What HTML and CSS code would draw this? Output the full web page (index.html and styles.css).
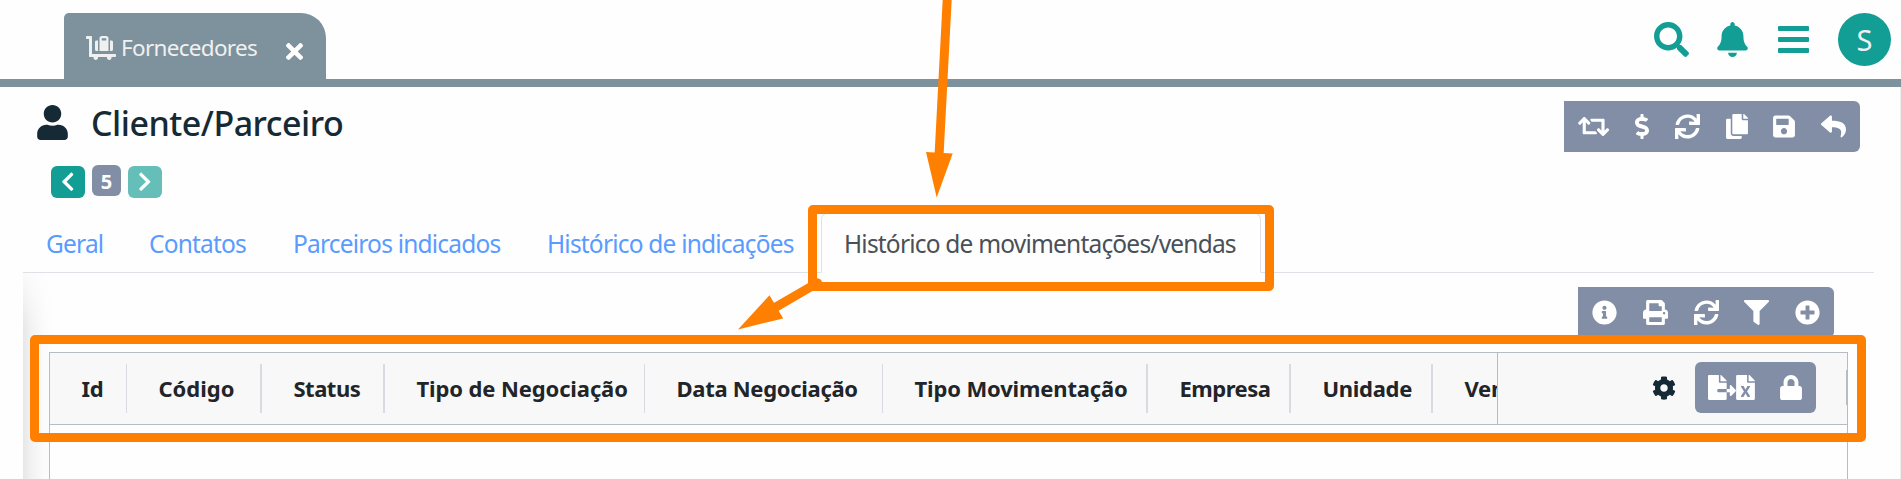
FILE: index.html
```html
<!DOCTYPE html>
<html lang="pt-BR">
<head>
<meta charset="utf-8">
<title>Cliente/Parceiro</title>
<link rel="stylesheet" href="styles.css">
</head>
<body>
<svg class="sprite" aria-hidden="true">
  <symbol id="cart" viewBox="0 0 640 512"><path d="M224 320h32V96h-32c-17.67 0-32 14.33-32 32v160c0 17.67 14.33 32 32 32zm352-32V128c0-17.67-14.33-32-32-32h-32v224h32c17.67 0 32-14.33 32-32zm48 96H128V16c0-8.84-7.16-16-16-16H16C7.16 0 0 7.16 0 16v32c0 8.84 7.16 16 16 16h48v368c0 8.84 7.16 16 16 16h82.94c-1.79 5.03-2.94 10.36-2.94 16 0 26.51 21.49 48 48 48s48-21.49 48-48c0-5.64-1.15-10.97-2.94-16h197.88c-1.79 5.03-2.94 10.36-2.94 16 0 26.51 21.49 48 48 48s48-21.49 48-48c0-5.64-1.15-10.97-2.94-16H624c8.84 0 16-7.16 16-16v-32c0-8.84-7.16-16-16-16zM480 96V48c0-26.51-21.49-48-48-48h-96c-26.51 0-48 21.49-48 48v272h192V96zm-48 0h-96V48h96v48z"/></symbol>
  <symbol id="times" viewBox="0 0 352 512"><path d="M242.72 256l100.07-100.07c12.28-12.28 12.28-32.19 0-44.48l-22.24-22.24c-12.28-12.28-32.19-12.28-44.48 0L176 189.28 75.93 89.21c-12.28-12.28-32.19-12.28-44.48 0L9.21 111.45c-12.28 12.28-12.28 32.19 0 44.48L109.28 256 9.21 356.07c-12.28 12.28-12.28 32.19 0 44.48l22.24 22.24c12.28 12.28 32.2 12.28 44.48 0L176 322.72l100.07 100.07c12.28 12.28 32.2 12.28 44.48 0l22.24-22.24c12.28-12.28 12.28-32.19 0-44.48L242.72 256z"/></symbol>
  <symbol id="search" viewBox="0 0 512 512"><path d="M505 442.7L405.3 343c-4.5-4.5-10.6-7-17-7H372c27.6-35.3 44-79.7 44-128C416 93.1 322.9 0 208 0S0 93.1 0 208s93.1 208 208 208c48.3 0 92.7-16.4 128-44v16.3c0 6.4 2.5 12.5 7 17l99.7 99.7c9.4 9.4 24.6 9.4 33.9 0l28.3-28.3c9.4-9.4 9.4-24.6.1-34zM208 336c-70.7 0-128-57.2-128-128 0-70.7 57.2-128 128-128 70.7 0 128 57.2 128 128 0 70.7-57.2 128-128 128z"/></symbol>
  <symbol id="bell" viewBox="0 0 448 512"><path d="M224 512c35.32 0 63.97-28.65 63.97-64H160.03c0 35.35 28.65 64 63.97 64zm215.39-149.71c-19.32-20.76-55.47-51.99-55.47-154.29 0-77.7-54.48-139.9-127.94-155.16V32c0-17.67-14.32-32-31.98-32s-31.98 14.33-31.98 32v20.84C118.56 68.1 64.08 130.3 64.08 208c0 102.3-36.15 133.53-55.47 154.29-6 6.45-8.66 14.16-8.61 21.71.11 16.4 12.98 32 32.1 32h383.8c19.12 0 32-15.6 32.1-32 .05-7.55-2.61-15.27-8.61-21.71z"/></symbol>
  <symbol id="bars" viewBox="0 0 31 27"><rect width="31" height="5" rx="1"/><rect y="11" width="31" height="5" rx="1"/><rect y="22" width="31" height="5" rx="1"/></symbol>
  <symbol id="user" viewBox="0 0 448 512"><path d="M224 256c70.7 0 128-57.3 128-128S294.7 0 224 0 96 57.3 96 128s57.3 128 128 128zm89.6 32h-16.7c-22.2 10.2-46.9 16-72.9 16s-50.6-5.8-72.9-16h-16.7C60.2 288 0 348.2 0 422.4V464c0 26.5 21.5 48 48 48h352c26.5 0 48-21.5 48-48v-41.6c0-74.2-60.2-134.4-134.4-134.4z"/></symbol>
  <symbol id="chevron" viewBox="0 0 320 512"><path d="M34.52 239.03L228.87 44.69c9.37-9.37 24.57-9.37 33.94 0l22.67 22.67c9.36 9.36 9.37 24.52.04 33.9L131.49 256l154.02 154.75c9.34 9.38 9.32 24.54-.04 33.9l-22.67 22.67c-9.37 9.37-24.57 9.37-33.94 0L34.52 272.97c-9.37-9.37-9.37-24.57 0-33.94z"/></symbol>
  <symbol id="retweet" viewBox="0 0 640 512"><path d="M629.657 343.598L528.971 444.284c-9.373 9.372-24.568 9.372-33.941 0L394.343 343.598c-9.373-9.373-9.373-24.569 0-33.941l10.823-10.823c9.562-9.562 25.133-9.34 34.419.492L480 342.118V160H292.451a24.005 24.005 0 0 1-16.971-7.029l-16-16C244.361 121.851 255.069 96 276.451 96H520c13.255 0 24 10.745 24 24v222.118l40.416-42.792c9.285-9.831 24.856-10.054 34.419-.492l10.823 10.823c9.372 9.372 9.372 24.569-.001 33.941zm-265.138 15.431A23.999 23.999 0 0 0 347.548 352H160V169.881l40.416 42.792c9.286 9.831 24.856 10.054 34.419.491l10.822-10.822c9.373-9.373 9.373-24.569 0-33.941L144.971 67.716c-9.373-9.373-24.569-9.373-33.941 0L10.343 168.402c-9.373 9.373-9.373 24.569 0 33.941l10.822 10.822c9.562 9.562 25.133 9.34 34.419-.491L96 169.881V392c0 13.255 10.745 24 24 24h243.549c21.382 0 32.09-25.851 16.971-40.971l-16.001-16z"/></symbol>
  <symbol id="dollar" viewBox="0 0 288 512"><path d="M209.2 233.4l-108-31.6C88.7 198.2 80 186.5 80 173.5c0-16.3 13.2-29.5 29.5-29.5h66.3c12.2 0 24.2 3.7 34.2 10.5 6.1 4.1 14.3 3.1 19.5-2l34.8-34c7.1-6.9 6.1-18.4-1.8-24.5C238 74.8 207.4 64.1 176 64V16c0-8.8-7.2-16-16-16h-32c-8.8 0-16 7.2-16 16v48h-2.5C45.8 64-5.4 118.7.5 183.6c4.2 46.1 39.4 83.6 83.8 96.6l102.5 30c12.5 3.7 21.2 15.3 21.2 28.3 0 16.3-13.2 29.5-29.5 29.5h-66.3C100 368 88 364.3 78 357.5c-6.1-4.1-14.3-3.1-19.5 2l-34.8 34c-7.1 6.9-6.1 18.4 1.8 24.5 24.5 19.2 55.1 29.9 86.5 30v48c0 8.8 7.2 16 16 16h32c8.8 0 16-7.2 16-16v-48.2c46.6-.9 90.3-28.6 105.7-72.7 21.5-61.6-14.6-124.8-72.5-141.7z"/></symbol>
  <symbol id="sync" viewBox="0 0 512 512"><path d="M440.65 12.57l4 82.77A247.16 247.16 0 0 0 255.83 8C134.73 8 33.91 94.92 12.29 209.82A12 12 0 0 0 24.09 224h49.05a12 12 0 0 0 11.67-9.26 175.91 175.91 0 0 1 317-56.94l-101.46-4.86a12 12 0 0 0-12.57 12v47.41a12 12 0 0 0 12 12H500a12 12 0 0 0 12-12V12a12 12 0 0 0-12-12h-47.37a12 12 0 0 0-11.98 12.57zM255.83 432a175.61 175.61 0 0 1-146-77.8l101.8 4.87a12 12 0 0 0 12.57-12v-47.4a12 12 0 0 0-12-12H12a12 12 0 0 0-12 12V500a12 12 0 0 0 12 12h47.35a12 12 0 0 0 12-12.6l-4.15-82.57A247.17 247.17 0 0 0 255.83 504c121.11 0 221.93-86.92 243.55-201.82a12 12 0 0 0-11.8-14.18h-49.05a12 12 0 0 0-11.67 9.26A175.86 175.86 0 0 1 255.83 432z"/></symbol>
  <symbol id="copy" viewBox="0 0 448 512"><path d="M320 448v40c0 13.255-10.745 24-24 24H24c-13.255 0-24-10.745-24-24V120c0-13.255 10.745-24 24-24h72v296c0 30.879 25.121 56 56 56h168zm0-344V0H152c-13.255 0-24 10.745-24 24v368c0 13.255 10.745 24 24 24h272c13.255 0 24-10.745 24-24V128H344c-13.2 0-24-10.8-24-24zm120.971-31.029L375.029 7.029A24 24 0 0 0 358.059 0H352v96h96v-6.059a24 24 0 0 0-7.029-16.97z"/></symbol>
  <symbol id="save" viewBox="0 0 448 512"><path d="M433.941 129.941l-83.882-83.882A48 48 0 0 0 316.118 32H48C21.49 32 0 53.49 0 80v352c0 26.51 21.49 48 48 48h352c26.51 0 48-21.49 48-48V163.882a48 48 0 0 0-14.059-33.941zM224 416c-35.346 0-64-28.654-64-64 0-35.346 28.654-64 64-64s64 28.654 64 64c0 35.346-28.654 64-64 64zm96-304.52V212c0 6.627-5.373 12-12 12H76c-6.627 0-12-5.373-12-12V108c0-6.627 5.373-12 12-12h228.52c3.183 0 6.235 1.264 8.485 3.515l3.48 3.48A11.996 11.996 0 0 1 320 111.48z"/></symbol>
  <symbol id="reply" viewBox="0 0 512 512"><path d="M8.309 189.836L184.313 37.851C199.719 24.546 224 35.347 224 56.015v80.053c160.629 1.839 288 34.032 288 186.258 0 61.441-39.581 122.309-83.333 154.132-13.653 9.931-33.111-2.533-28.077-18.631 45.344-145.012-21.507-183.51-176.59-185.742V360c0 20.7-24.3 31.453-39.687 18.164l-176.004-152c-11.071-9.562-11.086-26.753 0-36.328z"/></symbol>
  <symbol id="info" viewBox="0 0 512 512"><path d="M256 8C119.043 8 8 119.083 8 256c0 136.997 111.043 248 248 248s248-111.003 248-248C504 119.083 392.957 8 256 8zm0 110c23.196 0 42 18.804 42 42s-18.804 42-42 42-42-18.804-42-42 18.804-42 42-42zm56 254c0 6.627-5.373 12-12 12h-88c-6.627 0-12-5.373-12-12v-24c0-6.627 5.373-12 12-12h12v-64h-12c-6.627 0-12-5.373-12-12v-24c0-6.627 5.373-12 12-12h64c6.627 0 12 5.373 12 12v100h12c6.627 0 12 5.373 12 12v24z"/></symbol>
  <symbol id="print" viewBox="0 0 512 512"><path d="M448 192V77.25c0-8.49-3.37-16.62-9.37-22.63L393.37 9.37c-6-6-14.14-9.37-22.63-9.37H96C78.33 0 64 14.33 64 32v160c-35.35 0-64 28.65-64 64v112c0 8.84 7.16 16 16 16h48v96c0 17.67 14.33 32 32 32h320c17.67 0 32-14.33 32-32v-96h48c8.84 0 16-7.16 16-16V256c0-35.35-28.65-64-64-64zm-64 256H128v-96h256v96zm0-224H128V64h192v48c0 8.84 7.16 16 16 16h48v96zm48 72c-13.25 0-24-10.75-24-24 0-13.26 10.75-24 24-24s24 10.74 24 24c0 13.25-10.75 24-24 24z"/></symbol>
  <symbol id="filter" viewBox="0 0 512 512"><path d="M487.976 0H24.028C2.71 0-8.047 25.866 7.058 40.971L192 225.941V432c0 7.831 3.821 15.17 10.237 19.662l80 55.98C298.02 518.69 320 507.493 320 487.98V225.941l184.947-184.97C520.021 25.896 509.338 0 487.976 0z"/></symbol>
  <symbol id="plus" viewBox="0 0 512 512"><path d="M256 8C119 8 8 119 8 256s111 248 248 248 248-111 248-248S393 8 256 8zm144 276c0 6.6-5.4 12-12 12h-92v92c0 6.6-5.4 12-12 12h-56c-6.6 0-12-5.4-12-12v-92h-92c-6.6 0-12-5.4-12-12v-56c0-6.6 5.4-12 12-12h92v-92c0-6.6 5.4-12 12-12h56c6.6 0 12 5.4 12 12v92h92c6.6 0 12 5.4 12 12v56z"/></symbol>
  <symbol id="cog" viewBox="0 0 512 512"><path d="M487.4 315.7l-42.6-24.6c4.3-23.2 4.3-47 0-70.2l42.6-24.6c4.9-2.8 7.1-8.6 5.5-14-11.1-35.6-30-67.8-54.7-94.6-3.8-4.1-10-5.1-14.8-2.3L380.8 110c-17.9-15.4-38.5-27.3-60.8-35.1V25.8c0-5.6-3.9-10.5-9.4-11.7-36.7-8.2-74.3-7.8-109.2 0-5.5 1.2-9.4 6.1-9.4 11.7V75c-22.2 7.9-42.8 19.8-60.8 35.1L88.7 85.5c-4.9-2.8-11-1.9-14.8 2.3-24.7 26.7-43.6 58.9-54.7 94.6-1.7 5.4.6 11.2 5.5 14L67.3 221c-4.3 23.2-4.3 47 0 70.2l-42.6 24.6c-4.9 2.8-7.1 8.6-5.5 14 11.1 35.6 30 67.8 54.7 94.6 3.8 4.1 10 5.1 14.8 2.3l42.6-24.6c17.9 15.4 38.5 27.3 60.8 35.1v49.2c0 5.6 3.9 10.5 9.4 11.7 36.7 8.2 74.3 7.8 109.2 0 5.5-1.2 9.4-6.1 9.4-11.7v-49.2c22.2-7.9 42.8-19.8 60.8-35.1l42.6 24.6c4.9 2.8 11 1.9 14.8-2.3 24.7-26.7 43.6-58.9 54.7-94.6 1.5-5.5-.7-11.3-5.6-14.1zM256 336c-44.1 0-80-35.9-80-80s35.9-80 80-80 80 35.9 80 80-35.9 80-80 80z"/></symbol>
  <symbol id="export" viewBox="0 0 576 512"><path d="M384 121.9c0-6.3-2.5-12.4-7-16.9L279.1 7c-4.5-4.5-10.6-7-17-7H256v128h128zM571 308l-95.7-96.4c-10.1-10.1-27.4-3-27.4 11.3V288h-64v64h64v65.2c0 14.3 17.3 21.4 27.4 11.3L571 332c6.6-6.6 6.6-17.4 0-24zm-379 28v-32c0-8.8 7.2-16 16-16h176V160H248c-13.2 0-24-10.8-24-24V0H24C10.7 0 0 10.7 0 24v464c0 13.3 10.7 24 24 24h336c13.3 0 24-10.7 24-24V352H208c-8.8 0-16-7.2-16-16z"/></symbol>
  <symbol id="excel" viewBox="0 0 384 512"><path d="M224 136V0H24C10.7 0 0 10.7 0 24v464c0 13.3 10.7 24 24 24h336c13.3 0 24-10.7 24-24V160H248c-13.2 0-24-10.8-24-24zm60.1 106.5L224 336l60.1 93.5c5.1 8-.6 18.5-10.1 18.5h-34.9c-4.4 0-8.5-2.4-10.6-6.3C208.9 405.5 192 373 192 373c-6.4 14.8-10 20-36.6 68.8-2.1 3.9-6.1 6.3-10.5 6.3H110c-9.5 0-15.2-10.5-10.1-18.5l60.3-93.5-60.3-93.5c-5.2-8 .6-18.5 10.1-18.5h34.8c4.4 0 8.5 2.4 10.6 6.3 26.1 48.8 20 33.6 36.6 68.5 0 0 6.1-11.7 36.6-68.5 2.1-3.9 6.2-6.3 10.6-6.3H274c9.5-.1 15.2 10.4 10.1 18.4zM384 121.9v6.1H256V0h6.1c6.4 0 12.5 2.5 17 7l97.9 98c4.5 4.5 7 10.6 7 16.9z"/></symbol>
  <symbol id="lock" viewBox="0 0 448 512"><path d="M400 224h-24v-72C376 68.2 307.8 0 224 0S72 68.2 72 152v72H48c-26.5 0-48 21.5-48 48v192c0 26.5 21.5 48 48 48h352c26.5 0 48-21.5 48-48V272c0-26.5-21.5-48-48-48zm-104 0H152v-72c0-39.7 32.3-72 72-72s72 32.3 72 72v72z"/></symbol>
</svg>

<header class="topbar">
  <div class="window-tab">
    <svg class="cart"><use href="#cart"/></svg>
    <span class="window-name">Fornecedores</span>
    <svg class="close"><use href="#times"/></svg>
  </div>
  <div class="top-actions">
    <svg class="search"><use href="#search"/></svg>
    <svg class="bell"><use href="#bell"/></svg>
    <svg class="bars"><use href="#bars"/></svg>
    <span class="avatar">S</span>
  </div>
</header>

<main class="page">
  <div class="title-row">
    <svg class="user"><use href="#user"/></svg>
    <h1 class="title">Cliente/Parceiro</h1>
    <div class="toolbar">
      <svg class="ic w31"><use href="#retweet"/></svg>
      <svg class="ic w14"><use href="#dollar"/></svg>
      <svg class="ic"><use href="#sync"/></svg>
      <svg class="ic w22"><use href="#copy"/></svg>
      <svg class="ic w22"><use href="#save"/></svg>
      <svg class="ic"><use href="#reply"/></svg>
    </div>
  </div>
  <div class="pager">
    <span class="page-btn"><svg class="chev"><use href="#chevron"/></svg></span>
    <span class="page-num">5</span>
    <span class="page-btn next"><svg class="chev"><use href="#chevron"/></svg></span>
  </div>
  <nav class="tabs">
    <a class="tab t-geral">Geral</a>
    <a class="tab t-contatos">Contatos</a>
    <a class="tab t-parceiros">Parceiros indicados</a>
    <a class="tab t-indicacoes">Histórico de indicações</a>
    <a class="tab active">Histórico de movimentações/vendas</a>
  </nav>
  <section class="panel">
    <div class="toolbar grid-tools">
      <svg class="ic"><use href="#info"/></svg>
      <svg class="ic"><use href="#print"/></svg>
      <svg class="ic"><use href="#sync"/></svg>
      <svg class="ic"><use href="#filter"/></svg>
      <svg class="ic"><use href="#plus"/></svg>
    </div>
    <div class="grid">
      <div class="grid-head">
        <div class="cols">
          <div class="col c-id">Id</div>
          <div class="col c-codigo thick">Código</div>
          <div class="col c-status thick">Status</div>
          <div class="col c-tiponeg">Tipo de Negociação</div>
          <div class="col c-data">Data Negociação</div>
          <div class="col c-tipomov thick">Tipo Movimentação</div>
          <div class="col c-empresa thick">Empresa</div>
          <div class="col c-unidade thick">Unidade</div>
          <div class="col c-ver">Vendedor</div>
        </div>
        <div class="head-actions">
          <svg class="cog"><use href="#cog"/></svg>
          <div class="head-buttons">
            <svg class="ic w28"><use href="#export"/></svg>
            <svg class="ic w19"><use href="#excel"/></svg>
            <svg class="ic w22 lock"><use href="#lock"/></svg>
          </div>
          <span class="resizer"></span>
        </div>
      </div>
    </div>
  </section>
</main>

<div class="mark mark-tab"></div>
<div class="mark mark-head"></div>
<svg class="arrows" viewBox="0 0 1901 479">
  <path class="shaft" d="M947.7 -10L939 156M817.5 282.8L776 307"/>
  <path class="tip" d="M926 152L952.7 153.4L936.7 197.5ZM769.5 295.3L783.2 318.4L738 329.5Z"/>
</svg>
</body>
</html>
```

FILE: styles.css
```css
* { box-sizing: border-box; }
body {
  position: relative;
  margin: 0;
  height: 479px;
  overflow: hidden;
  background: #fefefe;
  font-family: "Noto Sans", "Open Sans", sans-serif;
  color: #212529;
}
svg { display: block; flex: none; fill: currentColor; }
.sprite { position: absolute; width: 0; height: 0; }

.topbar {
  display: flex;
  justify-content: space-between;
  height: 87px;
  padding: 13px 10px 0 64px;
  border-bottom: 8px solid #7d929c;
}
.window-tab {
  display: flex;
  width: 262px;
  height: 66px;
  padding-left: 22px;
  border-radius: 5px 25px 0 0;
  background: #7d929c;
  color: #f0f0f0;
}
.cart { width: 30px; height: 24px; margin-top: 23px; }
.window-name {
  width: 164px;
  padding: 16px 0 0 5px;
  font-size: 22.5px;
  letter-spacing: -.7px;
  line-height: 38px;
  white-space: nowrap;
}
.close { width: 17px; height: 25px; margin-top: 26px; margin-left: 6px; color: #fff; }
.top-actions { display: flex; color: #129e94; }
.search { width: 35px; height: 35px; margin: 9px 28px 0 0; }
.bell { width: 31px; height: 35px; margin: 9px 30px 0 0; }
.bars { width: 31px; height: 27px; margin: 13px 29px 0 0; }
.avatar {
  width: 53px;
  height: 53px;
  border-radius: 50%;
  background: #129e94;
  color: #f0f0f0;
  font-size: 29px;
  line-height: 54px;
  text-align: center;
}

.page { height: 392px; padding: 14px 26px 0 23px; border-right: 1px solid #eee; }
.title-row { display: flex; height: 51px; padding: 0 14px; }
.user { width: 31px; height: 35px; margin-top: 4px; color: #152a35; }
.title {
  flex: 1;
  margin: 0 0 0 23px;
  font-size: 34px;
  font-weight: 500;
  letter-spacing: -.5px;
  line-height: 45px;
  color: #152a35;
}
.toolbar {
  display: flex;
  align-items: center;
  justify-content: space-between;
  width: 296px;
  height: 51px;
  padding: 0 14px;
  border-radius: 0 6px 6px 0;
  background: #828ea6;
  color: #fff;
}
.ic { width: 25px; height: 25px; }
.w31 { width: 31.25px; }
.w28 { width: 28px; }
.w22 { width: 22px; }
.w19 { width: 19px; }
.w14 { width: 14px; }

.pager { display: flex; gap: 7px; height: 34px; margin: 13px 0 0 28px; color: #fff; }
.page-btn {
  display: flex;
  align-items: center;
  justify-content: center;
  width: 34px;
  height: 32px;
  margin-top: 1px;
  border-radius: 6px;
  background: #129e94;
}
.next { background: #65bfb8; }
.next .chev { transform: scaleX(-1); }
.chev { width: 13.5px; height: 21.5px; }
.page-num {
  width: 29px;
  height: 31px;
  border-radius: 6px;
  background: #828ea6;
  font-size: 20px;
  font-weight: 700;
  line-height: 33px;
  text-align: center;
}

.tabs {
  display: flex;
  height: 60px;
  margin-top: 14px;
  border-bottom: 1px solid #dee2e6;
}
.tab {
  height: 60px;
  padding: 0 0 0 23px;
  font-size: 24.5px;
  letter-spacing: -.8px;
  line-height: 61px;
  white-space: nowrap;
  color: #5a9bff;
}
.t-geral { width: 103px; }
.t-contatos { width: 144px; }
.t-parceiros { width: 254px; }
.t-indicacoes { width: 297px; }
.active {
  width: 440px;
  padding-left: 22px;
  border: 1px solid #dee2e6;
  border-bottom-color: #fefefe;
  border-radius: 6px 6px 0 0;
  line-height: 59px;
  color: #495057;
}

.panel { position: relative; height: 206px; padding: 14px 26px 0; }
.panel::before {
  content: "";
  position: absolute;
  left: 0;
  top: 0;
  width: 30px;
  height: 100%;
  background: linear-gradient(to right, rgba(0,0,0,.09), rgba(0,0,0,.045) 30%, rgba(0,0,0,.012) 70%, transparent);
  mask-image: linear-gradient(to bottom, rgba(0,0,0,.15), #000 55px);
}
.grid-tools { width: 256px; margin: 0 14px 0 auto; }
.grid {
  position: relative;
  height: 150px;
  margin-top: 14px;
  border: 1px solid #b6bcc3;
  background: #fefefe;
}
.grid-head { display: flex; height: 72px; border-bottom: 1px solid #b6bcc3; background: #f8f8f8; }
.cols { display: flex; align-items: center; width: 1447px; overflow: hidden; }
.col {
  flex: none;
  height: 49px;
  border-right: 1px solid #d8dbe0;
  padding-left: 31.5px;
  font-size: 22px;
  font-weight: 700;
  letter-spacing: -.3px;
  line-height: 49px;
  white-space: nowrap;
}
.thick { border-right-width: 2px; }
.c-id { width: 77px; }
.c-codigo { width: 135px; letter-spacing: 0; }
.c-status { width: 123px; letter-spacing: -.5px; }
.c-tiponeg { width: 260px; letter-spacing: -.12px; }
.c-data { width: 238px; }
.c-tipomov { width: 265px; letter-spacing: -.15px; }
.c-empresa { width: 143px; letter-spacing: -.5px; }
.c-unidade { width: 142px; }
.c-ver { width: 160px; border: 0; }
.head-actions {
  display: flex;
  flex: 1;
  align-items: center;
  padding-bottom: 2px;
  border-left: 1px solid #b6bcc3;
}
.cog { width: 24px; height: 24px; margin: 0 19.5px 0 153.5px; color: #152a35; }
.head-buttons {
  display: flex;
  align-items: center;
  width: 121px;
  height: 51px;
  padding-left: 13px;
  border-radius: 6px;
  background: #828ea6;
  color: #fff;
}
.lock { margin-left: 25px; }
.resizer { width: 1px; height: 35px; margin-left: auto; background: #b6bcc3; }

.mark { position: absolute; border: 9px solid #ff8000; border-radius: 5px; }
.mark-tab { left: 808px; top: 205px; width: 466px; height: 86px; }
.mark-head { left: 30px; top: 335px; width: 1836px; height: 107px; }
.arrows { position: absolute; left: 0; top: 0; width: 1901px; height: 479px; }
.shaft { fill: none; stroke: #ff8000; stroke-width: 9; stroke-linecap: round; }
.tip { fill: #ff8000; }
```
